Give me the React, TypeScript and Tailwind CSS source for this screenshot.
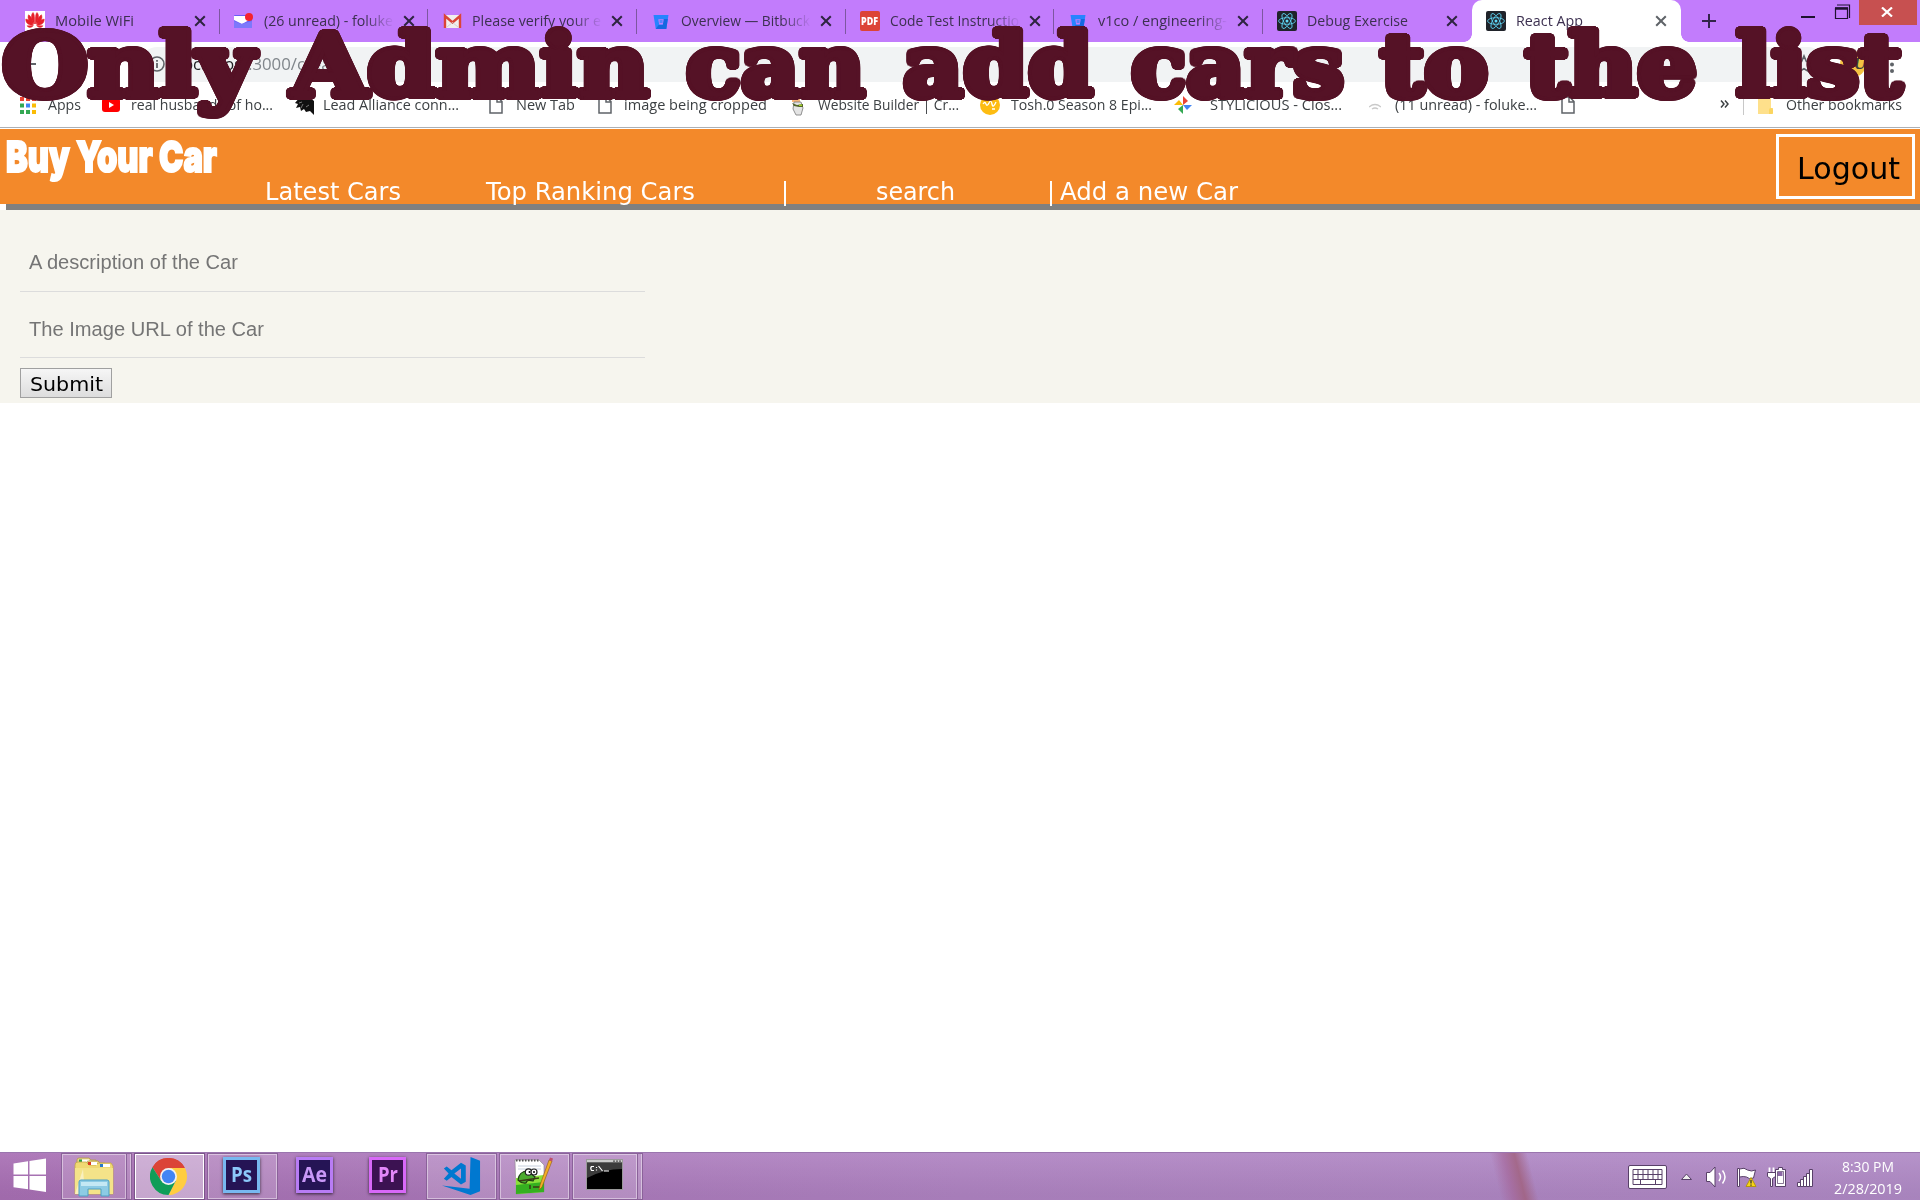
import { useLayoutEffect, useRef, type ReactNode } from 'react';

const UI = 'font-["Open_Sans",sans-serif]';

/* Single line of text squeezed or stretched horizontally to a given width. */
function Fit({ w, className = '', children }: { w: number; className?: string; children: ReactNode }) {
  const text = useRef<HTMLSpanElement>(null);
  useLayoutEffect(() => {
    const el = text.current;
    if (el && el.offsetWidth) {
      el.style.transform = 'none';
      el.style.transform = `scaleX(${w / el.getBoundingClientRect().width})`;
    }
  }, [w]);
  return (
    <span className={`block shrink-0 whitespace-pre ${className}`} style={{ width: w }}>
      <span ref={text} className="inline-block origin-left">{children}</span>
    </span>
  );
}

function Cross({ color = '#33294a' }: { color?: string }) {
  return (
    <svg width="12" height="12" viewBox="0 0 12 12" className="shrink-0">
      <path d="M1.2 1.2l9.6 9.6M10.8 1.2l-9.6 9.6" stroke={color} strokeWidth="2" />
    </svg>
  );
}

function ReactIcon() {
  return (
    <svg width="20" height="20" viewBox="0 0 20 20">
      <rect width="20" height="20" rx="2" fill="#20232a" />
      <g fill="none" stroke="#61dafb" strokeWidth=".8">
        <ellipse cx="10" cy="10" rx="8.4" ry="3.3" />
        <ellipse cx="10" cy="10" rx="8.4" ry="3.3" transform="rotate(60 10 10)" />
        <ellipse cx="10" cy="10" rx="8.4" ry="3.3" transform="rotate(120 10 10)" />
      </g>
      <circle cx="10" cy="10" r="1.5" fill="#61dafb" />
    </svg>
  );
}

function Bitbucket() {
  return (
    <svg width="20" height="20" viewBox="0 0 20 20">
      <path d="M2.5 4h15l-2.2 14H4.8z" fill="#2684ff" />
      <path d="M12.5 8h4.3l-1.5 10H4.8l2.8-4h4.2z" fill="#1668e0" />
      <path d="M7.3 8.2h5.4l-.9 5.2H8.2z" fill="#c27cfc" />
      <path d="M8.6 9h3v3h-3z" fill="#2684ff" opacity=".7" />
    </svg>
  );
}

const favicons: Record<string, ReactNode> = {
  huawei: (
    <svg width="20" height="20" viewBox="0 0 20 20">
      <rect width="20" height="20" fill="#fff" />
      <g fill="#e6202a" stroke="#e6202a" strokeWidth=".5">
        <path d="M9.6 13C6 9 5.500 4 8 1.500 9.400 2.500 9.800 7 9.600 13zM10.400 13C14 9 14.500 4 12 1.500 10.600 2.500 10.200 7 10.400 13z" />
        <path d="M8.600 13.200C4.500 11.500 2 8 3.500 3.800 6 5 8 9 8.600 13.200zM11.400 13.200C15.500 11.500 18 8 16.500 3.800 14 5 12 9 11.400 13.200z" />
        <path d="M8.300 14.300C3.500 14.500.5 12 .8 8 4 8.500 6.800 11 8.300 14.300zM11.700 14.300C16.500 14.500 19.500 12 19.200 8 16 8.500 13.200 11 11.700 14.300z" />
        <path d="M2 14.800h6.200C6 17.200 3.500 17 2 14.800zM18 14.800h-6.200C14 17.200 16.500 17 18 14.800z" />
      </g>
    </svg>
  ),
  mail: (
    <svg width="20" height="20" viewBox="0 0 20 20">
      <rect x="0" y="4" width="18" height="13" rx="1" fill="#6a5cf6" />
      <path d="M0 5h12l5 3-9 5-8-4z" fill="#fff" />
      <path d="M0 10l7 3 11-3v7H0z" fill="#7d78fb" />
      <circle cx="15" cy="6" r="4" fill="#f5222d" />
    </svg>
  ),
  gmail: (
    <svg width="20" height="20" viewBox="0 0 20 20">
      <path d="M2 4h17v13H2z" fill="#f1eeee" />
      <path d="M3 17V5l7.500 6.500L18 5v12" fill="none" stroke="#db4437" strokeWidth="2.400" />
      <path d="M5 16l5.500-4.500L16 16" fill="none" stroke="#d4d0d0" strokeWidth="1" />
    </svg>
  ),
  bitbucket: <Bitbucket />,
  pdf: (
    <span className="flex h-5 w-5 items-center justify-center rounded-[2px] bg-[#dc4437]">
      <Fit w={17} className='font-["Open_Sans",sans-serif] text-[10px] leading-5 font-extrabold text-white'>PDF</Fit>
    </span>
  ),
  react: <ReactIcon />,
};

type Tab = { icon: string; title: string; w: number; active?: boolean; noSep?: boolean };
const tabs: Tab[] = [
  { icon: 'huawei', title: 'Mobile WiFi', w: 79 },
  { icon: 'mail', title: '(26 unread) - foluke', w: 129 },
  { icon: 'gmail', title: 'Please verify your e', w: 129 },
  { icon: 'bitbucket', title: 'Overview — Bitbuck', w: 129 },
  { icon: 'pdf', title: 'Code Test Instructio', w: 129 },
  { icon: 'bitbucket', title: 'v1co / engineering-', w: 129 },
  { icon: 'react', title: 'Debug Exercise', w: 101, noSep: true },
  { icon: 'react', title: 'React App', w: 67, active: true, noSep: true },
];

function TabStrip() {
  return (
    <div className={`flex h-[42px] bg-[#c27cfc] pl-[11px] ${UI}`}>
      {tabs.map((t, i) => (
        <div
          key={i}
          className={`relative flex h-[42px] w-[208.7px] shrink-0 items-center pl-[14px] ${t.active ? 'rounded-t-[10px] bg-white' : ''}`}
        >
          {t.active && (
            <>
              <span className="absolute bottom-0 -left-2 h-2 w-2 bg-[radial-gradient(circle_at_0_0,#c27cfc_7.5px,#fff_8px)]" />
              <span className="absolute -right-2 bottom-0 h-2 w-2 bg-[radial-gradient(circle_at_100%_0,#c27cfc_7.5px,#fff_8px)]" />
            </>
          )}
          <span className="h-5 w-5 shrink-0">{favicons[t.icon]}</span>
          <span
            className={`mb-[2px] ml-[10px] w-[129px] shrink-0 overflow-hidden text-[15px] leading-[22px] text-[#3c3050] ${t.w > 120 ? '[mask-image:linear-gradient(to_right,#000_78%,transparent_101%)]' : ''}`}
          >
            <Fit w={t.w}>{t.title}</Fit>
          </span>
          <span className="ml-[10px] flex"><Cross color={t.active ? '#5f6368' : '#2e2440'} /></span>
          {!t.noSep && <span className="ml-auto h-[25px] w-px bg-[#7d56a0]" />}
        </div>
      ))}
      <svg width="16" height="16" viewBox="0 0 16 16" className="mt-[13px] ml-[20px]">
        <path d="M8 1v14M1 8h14" stroke="#33244a" strokeWidth="2" />
      </svg>
      <svg width="50" height="20" viewBox="0 0 50 20" className="ml-auto">
        <path d="M0 17h14" stroke="#1f1230" strokeWidth="2" />
        <path d="M34.500 8.500h12v10h-12zM34 8h13M36 5h12.500v13" fill="none" stroke="#1f1230" strokeWidth="1.200" />
        <path d="M34 8.500h13" stroke="#1f1230" strokeWidth="2.500" />
      </svg>
      <div className="mr-[3px] ml-[8px] flex h-[25px] w-[58px] items-center justify-center bg-[#c75050]">
        <svg width="12" height="10" viewBox="0 0 12 10" className="mr-[2px] mb-[2px]">
          <path d="M1 .5l10 9M11 .5l-10 9" stroke="#fff" strokeWidth="2.200" />
        </svg>
      </div>
    </div>
  );
}

function AddressBar() {
  return (
    <div className={`flex h-[44px] items-center bg-white ${UI}`}>
      <svg width="112" height="20" viewBox="0 0 112 20" className="ml-5" fill="none" stroke="#5f6368" strokeWidth="2">
        <path d="M16 10H1M8 3l-7 7 7 7" />
        <path d="M45 10h14M53 4l6 6-6 6" />
        <path d="M94 12a7 7 0 1 1-1-6M94 1v5h-5" />
      </svg>
      <div className="ml-[8px] flex h-[35px] w-[1685px] items-center rounded-[18px] bg-[#f1f3f4] pl-[9px]">
        <svg width="16" height="16" viewBox="0 0 16 16">
          <circle cx="8" cy="8" r="7" fill="none" stroke="#5f6368" strokeWidth="1.600" />
          <path d="M8 7v5M8 4v1.800" stroke="#5f6368" strokeWidth="1.800" />
        </svg>
        <span className="ml-[14px] flex text-[17px] leading-6 text-[#202124]">
          <Fit w={69}>localhost</Fit>
          <Fit w={98} className="text-[#80868b]">:3000/create</Fit>
        </span>
        <svg width="20" height="20" viewBox="0 0 20 20" className="mr-[11px] ml-auto">
          <path d="M10 2l2.400 5.500 5.800.5-4.400 3.900 1.300 5.800L10 14.700l-5.100 3 1.300-5.800L1.800 8l5.800-.5z" fill="none" stroke="#5f6368" strokeWidth="1.700" />
        </svg>
      </div>
      <span className='ml-[15px] flex h-[26px] w-[26px] items-center justify-end rounded-full bg-[#f5c242] font-["Liberation_Serif",serif] text-[17px] leading-[26px] font-bold text-[#3c3c3c] italic'>
        U
      </span>
      <svg width="6" height="20" viewBox="0 0 6 20" className="ml-[23px]" fill="#5f6368">
        <circle cx="3" cy="4" r="2" /><circle cx="3" cy="10.500" r="2" /><circle cx="3" cy="17" r="2" />
      </svg>
    </div>
  );
}

const Page = () => (
  <svg width="14" height="18" viewBox="0 0 14 18">
    <path d="M1 1h7.500L13 5.500V17H1zM8 1v5h5" fill="#fff" stroke="#5f6368" strokeWidth="1.500" />
  </svg>
);

const bookmarks: { x: number; tx: number; w: number; label: string; icon: ReactNode }[] = [
  {
    x: 20, tx: 48, w: 33, label: 'Apps',
    icon: (
      <svg width="16" height="17" viewBox="0 0 16 17">
        <path d="M0 0h4v4H0zM6 0h4v4H6zM12 0h4v4h-4z" fill="#ea4335" />
        <path d="M0 6.500h4v4H0zM0 13h4v4H0z" fill="#34a853" />
        <path d="M6 6.500h4v4H6z" fill="#4285f4" />
        <path d="M6 13h4v4H6z" fill="#34a853" />
        <path d="M12 6.500h4v4h-4zM12 13h4v4h-4z" fill="#fbbc05" />
      </svg>
    ),
  },
  {
    x: 102, tx: 131, w: 142, label: 'real husbands of ho...',
    icon: (
      <svg width="18" height="14" viewBox="0 0 18 14">
        <rect width="18" height="14" rx="3" fill="#f00" />
        <path d="M7 4l5 3-5 3z" fill="#fff" />
      </svg>
    ),
  },
  {
    x: 294, tx: 323, w: 136, label: 'Lead Alliance conn...',
    icon: (
      <svg width="20" height="20" viewBox="0 0 20 20">
        <path d="M1 8L6 2h9l5 4v14l-4-4-4 1-2-3-3 2-1-4-4 1 2-4z" fill="#111" />
        <path d="M7 13l2-4M12 12l3-2M5 8l3-1" stroke="#777" strokeWidth="1" />
      </svg>
    ),
  },
  { x: 489, tx: 516, w: 59, label: 'New Tab', icon: <Page /> },
  { x: 598, tx: 624, w: 143, label: 'image being cropped', icon: <Page /> },
  {
    x: 790, tx: 818, w: 141, label: 'Website Builder | Cr...',
    icon: (
      <svg width="16" height="21" viewBox="0 0 16 21">
        <path d="M2 0l3 3 2-3 3 3V7H2z" fill="#f7b77c" />
        <path d="M4 7h7l2 6-2 7H6l-3-6z" fill="#e4e4e4" stroke="#777" strokeWidth=".8" />
        <path d="M2 8l5 2 6-1v3H9l-5-1z" fill="#53652a" />
        <path d="M9 9.500h3v1.500H9z" fill="#a4d32a" />
      </svg>
    ),
  },
  {
    x: 980, tx: 1011, w: 141, label: 'Tosh.0 Season 8 Epi...',
    icon: (
      <svg width="20" height="20" viewBox="0 0 20 20">
        <circle cx="10" cy="10" r="10" fill="#fdbc12" />
        <path d="M3 9q2-3 3 0t3-1 3 1 4-2M12 14h3" fill="none" stroke="#fff" strokeWidth="1.300" />
      </svg>
    ),
  },
  {
    x: 1174, tx: 1210, w: 132, label: 'STYLICIOUS - Clos...',
    icon: (
      <svg width="18" height="18" viewBox="0 0 18 18">
        <path d="M9 0l5 5-5 4z" fill="#ea4335" />
        <path d="M18 9l-5 5-4-5z" fill="#4285f4" />
        <path d="M9 18l-5-5 5-4z" fill="#34a853" />
        <path d="M0 9l5-5 4 5z" fill="#fbbc05" />
      </svg>
    ),
  },
  {
    x: 1369, tx: 1395, w: 142, label: '(11 unread) - foluke...',
    icon: (
      <svg width="12" height="16" viewBox="0 0 12 16">
        <path d="M0 10q6-5 12 0M3 12q3-2 6 0" fill="none" stroke="#c9c9c9" strokeWidth="1.300" />
      </svg>
    ),
  },
  { x: 1561, tx: 1585, w: 0, label: '', icon: <Page /> },
];

function BookmarksBar() {
  return (
    <div className={`flex h-[41px] items-center bg-white pl-5 text-[15px] leading-5 text-[#3c4043] ${UI}`}>
      {bookmarks.map((b, i) => {
        const next = bookmarks[i + 1];
        return (
          <span key={b.x} className="flex shrink-0 items-center pb-[3px]" style={{ width: (next ? next.x : 1720) - b.x }}>
            <span className="shrink-0" style={{ width: b.tx - b.x }}>{b.icon}</span>
            {b.w > 0 && <Fit w={b.w} className="pb-[2px]">{b.label}</Fit>}
          </span>
        );
      })}
      <svg width="9" height="8" viewBox="0 0 9 8" className="mb-[5px]">
        <path d="M1 .5L4 4 1 7.500M5 .5L8 4 5 7.500" fill="none" stroke="#3c4043" strokeWidth="1.500" />
      </svg>
      <span className="mb-[2px] ml-[14px] h-[19px] w-px bg-[#c8c8c8]" />
      <svg width="17" height="19" viewBox="0 0 17 19" className="mb-[2px] ml-[13px]">
        <path d="M1 1h13v11h2v6H1z" fill="#fee08b" />
        <path d="M12 18v-4q0-2 2-2t2 2v3l-1 1z" fill="#fbd560" />
      </svg>
      <Fit w={116} className="ml-[12px] pb-[5px]">Other bookmarks</Fit>
    </div>
  );
}

const bannerWords: [string, number, number][] = [
  ['Only', 2, 252],
  ['Admin', 291, 358],
  ['can', 686, 179],
  ['add', 903, 190],
  ['cars', 1131, 213],
  ['to', 1380, 108],
  ['the', 1525, 172],
  ['list', 1736, 166],
];

/* Ring of hard shadows that thickens the letters and rounds their corners. */
const ring = (radius: number, steps: number) =>
  Array.from({ length: steps }, (_, i) => {
    const a = (i / steps) * Math.PI * 2;
    return `${(Math.cos(a) * radius).toFixed(2)}px ${(Math.sin(a) * radius).toFixed(2)}px 0 #551226`;
  });
const roundedWeight = [...ring(3.8, 24), ...ring(2, 10)].join(', ');

function Banner() {
  return (
    <div
      className='pointer-events-none absolute top-[1px] left-0 z-10 h-[130px] w-full font-["DejaVu_Serif",serif] text-[86px] leading-[130px] font-bold text-[#551226]'
      style={{ textShadow: roundedWeight }}
    >
      {bannerWords.map(([word, x, w]) => (
        <span key={word} className="absolute top-0" style={{ left: x }}>
          <Fit w={w}>{word}</Fit>
        </span>
      ))}
    </div>
  );
}

function SiteHeader() {
  return (
    <header className='bg-white font-["DejaVu_Sans",sans-serif]'>
      <div className="flex h-[75px] bg-[#f3892a]">
        <div className='w-[265px] pl-[6px] font-["Inter",sans-serif] text-[43px] leading-[55px] font-black text-white'>
          <Fit w={211} className="[-webkit-text-stroke:2px_white]">Buy Your Car</Fit>
        </div>
        <nav className="flex h-[75px] items-end text-[24px] leading-[24px] text-white">
          <Fit w={136}>Latest Cars</Fit>
          <Fit w={209} className="ml-[85px]">Top Ranking Cars</Fit>
          <Fit w={8} className="ml-[86px]">|</Fit>
          <Fit w={79} className="ml-[87px]">search</Fit>
          <Fit w={8} className="ml-[92px]">|</Fit>
          <Fit w={178} className="ml-[5px]">Add a new Car</Fit>
        </nav>
        <button className="mt-[5px] mr-[5px] ml-auto flex h-[65px] w-[139px] items-center border-[3px] border-white pt-[4px] pl-[18px] text-[30px] leading-[36px] text-black">
          <Fit w={103}>Logout</Fit>
        </button>
      </div>
      <div className="ml-[6px] h-[6px] bg-[#808080]" />
    </header>
  );
}

function CarForm() {
  return (
    <form className='h-[193px] bg-[#f6f5ee] pt-[24px] pl-5 font-["Liberation_Sans",sans-serif] text-[20px] text-[#757575]'>
      <div className="flex h-[58px] w-[625px] items-center border-b border-[#dcdcdc] pb-[2px] pl-[9px]">
        <Fit w={209}>A description of the Car</Fit>
      </div>
      <div className="mt-[8px] flex h-[58px] w-[625px] items-center border-b border-[#dcdcdc] pl-[9px]">
        <Fit w={235}>The Image URL of the Car</Fit>
      </div>
      <button
        type="button"
        className='mt-[10px] flex h-[30px] w-[92px] items-center border border-[#a0a0a0] bg-linear-to-b from-[#f6f6f6] to-[#dddddd] pt-px pl-[8px] font-["DejaVu_Sans",sans-serif] text-black'
      >
        <Fit w={73}>Submit</Fit>
      </button>
    </form>
  );
}

function AdobeIcon({ label, w, border, text, bg }: { label: string; w: number; border: string; text: string; bg: string }) {
  return (
    <span
      className="mr-[2px] mb-[4px] flex h-[36px] w-[37px] justify-center border-[3px] shadow-[0_1px_3px_rgba(0,0,0,0.7)]"
      style={{ borderColor: border, color: text, background: bg }}
    >
      <Fit w={w} className="text-[21px] leading-[28px] font-bold">{label}</Fit>
    </span>
  );
}

const taskItems: { w: number; gap: number; kind: 'open' | 'active' | 'none'; stub?: boolean; icon: ReactNode }[] = [
  {
    w: 66, gap: 0, kind: 'open', stub: true,
    icon: (
      <svg width="40" height="40" viewBox="0 0 40 40" className="mr-px">
        <path d="M3 8V3q0-2 2-2h10l2 2h5v8z" fill="#e6d58a" stroke="#b49b48" strokeWidth=".8" />
        <path d="M5 2.500h3v4H5z" fill="#2c9f45" /><path d="M8 2.500h7v4H8z" fill="#fff" />
        <path d="M13 10V5q0-1 1-1h10l2 2h5v6z" fill="#ecd98a" stroke="#b49b48" strokeWidth=".8" />
        <path d="M1 8q0-3 3-3h8l3 3h7l2-2h13l2 3v28H1z" fill="#f0d973" stroke="#c5a84a" strokeWidth=".8" />
        <path d="M14 5h3v3h-3z" fill="#dc3a20" /><path d="M17 5h6v3h-6z" fill="#fff" />
        <path d="M26 7h3v3h-3z" fill="#2779c9" /><path d="M29 7h7v3h-7z" fill="#fff" />
        <path d="M1 11h38v26H1z" fill="#f4e389" />
        <path d="M1 37L9 12l2 25z" fill="#fff" opacity=".45" />
        <path d="M5 39V25q0-2 2-2h26q2 0 2 2v14h-8v-7H14v7z" fill="#8dcbe4" stroke="#4c9fc4" />
        <path d="M7 25h26v4H7z" fill="#c4e8f4" />
      </svg>
    ),
  },
  {
    w: 71, gap: 2, kind: 'active',
    icon: (
      <svg width="37" height="37" viewBox="0 0 48 48" className="mr-[2px] mb-px">
        <path d="M24 24L3.200 12A24 24 0 0 1 44.800 12z" fill="#db4437" />
        <path d="M24 13h21.300A24 24 0 0 1 24 48l9.500-18.500z" fill="#ffcd40" />
        <path d="M24 13h21.300A24 24 0 0 0 3.200 12l11.300 17.500z" fill="#db4437" />
        <path d="M14.500 29.500L3.200 12A24 24 0 0 0 24 48l9.500-18.500z" fill="#0f9d58" />
        <circle cx="24" cy="24" r="11" fill="#f1f1f1" />
        <circle cx="24" cy="24" r="8.700" fill="#4285f4" />
      </svg>
    ),
  },
  { w: 71, gap: 2, kind: 'open', icon: <AdobeIcon label="Ps" w={21} border="#78b8f0" text="#8cc8fa" bg="#251455" /> },
  { w: 71, gap: 2, kind: 'none', icon: <AdobeIcon label="Ae" w={25} border="#b87cf5" text="#c898f8" bg="#251455" /> },
  { w: 71, gap: 2, kind: 'none', icon: <AdobeIcon label="Pr" w={20} border="#d868f8" text="#e388fa" bg="#3c1252" /> },
  {
    w: 71, gap: 2, kind: 'open',
    icon: (
      <svg width="40" height="40" viewBox="0 0 42 42" fill="#0078d0" className="mr-px mb-px">
        <path d="M31 1l10 4v32l-10 4L1 31l29 3.500z" />
        <path fillRule="evenodd" d="M21 7l5 3v17l-5 3-10-8-5 4-3-2 5-5.500L3 13l3-2 5 4zM21 13l-7 5.500 7 5.500z" />
      </svg>
    ),
  },
  {
    w: 71, gap: 2, kind: 'open',
    icon: (
      <svg width="40" height="38" viewBox="0 0 40 38" className="mr-[3px] mb-px">
        <path d="M2 3h24l5 5v27l-28 2z" fill="#fff" stroke="#888" strokeWidth=".6" />
        <path d="M3 3.500h23" stroke="#555" strokeWidth="2" strokeDasharray="1.500 1.500" />
        <path d="M5 9h23M5 12h23" stroke="#b8c4d4" strokeWidth=".8" />
        <path d="M3 21l28-3v17L3 37z" fill="#8be03a" />
        <path d="M3 28l28-3v10L3 37z" fill="#35b020" />
        <path d="M5 23q1-9 10-9l7 6-2 4q-6-2-7 2-4 1-8-3z" fill="#4cab2f" stroke="#1f3d14" strokeWidth="1.200" />
        <circle cx="15.500" cy="15" r="3.200" fill="#fff" stroke="#222" strokeWidth="1.200" />
        <circle cx="21" cy="15" r="3" fill="#fff" stroke="#222" strokeWidth="1.200" />
        <circle cx="16.500" cy="15" r="1" /><circle cx="21" cy="15" r="1" />
        <path d="M6 24l20-3M17 28v4M20 30h7" stroke="#3b3a16" strokeWidth="1.500" />
        <path d="M26 33l1-5L36 3l3 1-10 26z" fill="#f3ad28" stroke="#8c5a12" strokeWidth=".6" />
        <path d="M36 3l1-2.500 3 1-1 3z" fill="#c05068" />
      </svg>
    ),
  },
  {
    w: 66, gap: 2, kind: 'open', stub: true,
    icon: (
      <svg width="37" height="32" viewBox="0 0 37 32" className="mr-px mb-[3px]">
        <rect x=".5" y=".5" width="36" height="30" fill="#000" stroke="#999" />
        <path d="M1 1h35v2.500H1z" fill="#ccc" />
        <path d="M27 1.500h2v1.200h-2zM30 1.500h2v1.200h-2zM33 1.500h2v1.200h-2z" fill="#555" />
        <path d="M1 4h35v6Q18 10 1 19z" fill="#3c3c3c" />
        <path d="M8 7.500H5.500q-1.500 1.500 0 4H8M10.500 8v1M10.500 10.500v1M12.500 7l4 5M18 12h5" stroke="#fff" strokeWidth="1.200" fill="none" />
      </svg>
    ),
  },
];

const frame = {
  open: 'border border-[#8a6299] bg-[#ffffff2b] shadow-[inset_0_0_0_1px_#ffffff70]',
  active: 'border border-[#7a5589] bg-[#ffffff66] shadow-[inset_0_0_0_1px_#fff]',
  none: '',
};

function Taskbar() {
  return (
    <footer className={`relative mt-auto flex h-12 border-t border-[#9a75ae] bg-linear-to-r from-[#a86fb4] via-[#af83c2] to-[#b08ac6] ${UI}`}>
      <div className="absolute inset-0 bg-linear-to-b from-[#ffffff14] to-[#0000000c]" />
      <div className="absolute top-0 left-[1480px] h-full w-[70px] bg-[linear-gradient(76deg,transparent_26%,#a3629399_42%,#a0607ccc_56%,transparent_72%)]" />
      <div className="relative flex w-full">
        <svg width="34" height="35" viewBox="0 0 34 35" className="mt-[5px] ml-[13px]" fill="#fff">
          <path d="M.5 5.500L15 3.200V16.500H.5zM16.500 3L33 .5v16H16.500zM.5 18H15v13.300L.5 29.200zM16.500 18H33v16l-16.500-2.500z" />
        </svg>
        <div className="ml-[14px] flex">
          {taskItems.map((t, i) => (
            <div key={i} className="flex" style={{ marginLeft: t.gap }}>
              <div className={`flex h-[47px] shrink-0 items-center justify-center ${frame[t.kind]}`} style={{ width: t.w }}>
                {t.icon}
              </div>
              {t.stub && <div className="h-[47px] w-[5px] border-y border-r border-[#8a6299] bg-[#ffffff2b] shadow-[inset_-1px_0_0_0_#ffffff70]" />}
            </div>
          ))}
        </div>
        <svg width="187" height="28" viewBox="0 0 187 28" className="mt-[10px] mr-[19px] ml-auto">
          <g stroke="#584068" strokeWidth="1">
            <rect x=".5" y="2.500" width="38" height="23" rx="1.500" fill="#fff" />
            <path d="M5 6.500h29v15H5zM5 11.500h29M5 16.500h29M10 6v10M15 6v10M20 6v10M25 6v10M30 6v10M12.500 17v4M27.500 17v4" fill="none" />
            <path d="M53.500 16.500L58.500 11l5 5.500z" fill="#eee" />
            <path d="M78.500 9.500h3.500l5-5.500v20l-5-5.500h-3.500z" fill="#fff" />
            <path d="M109.500 5.500h2v18h-2zM111.500 6q5-2 8 1 4 2 8 0l-2 8q-4 2-7-1-3-1-7 0z" fill="#fff" />
            <path d="M123 14.500l5 9h-10z" fill="#f7d417" stroke="#b39511" />
            <path d="M141.500 4.500v6M145.500 4.500v6" stroke="#fff" strokeWidth="1.800" />
            <path d="M139.500 9.500h8v4l-3 2v8h-2v-8l-3-2z" fill="#fff" />
            <path d="M150.500 4.500h4v2h3v17h-10v-17h3z" fill="#fff" />
            <path d="M149.500 9h5v4h-5z" fill="#8c67a5" stroke="none" />
            <path d="M149.500 8.500h6v12h-6z" fill="none" strokeWidth=".7" />
            <path d="M169.500 19.500h3v4h-3zM172.500 16.500h3v7h-3zM175.500 13.500h3v10h-3zM178.500 10.500h3v13h-3zM181.500 6.500h3v17h-3z" fill="#fff" />
          </g>
          <path d="M91 10q3 4 0 8M94.500 7.500q5 6.500 0 13" fill="none" stroke="#fff" strokeWidth="1.500" />
          <path d="M123 17v3.500M123 21.500v1.200" stroke="#333" strokeWidth="1.300" />
        </svg>
        <div className="mr-[18px] flex w-[68px] flex-col items-center pt-[3px] text-[14.5px] leading-[22px] text-white">
          <Fit w={52}>8:30 PM</Fit>
          <Fit w={68}>2/28/2019</Fit>
        </div>
      </div>
    </footer>
  );
}

export default function App() {
  return (
    <div className="relative flex h-[1200px] w-[1920px] flex-col overflow-hidden bg-white">
      <TabStrip />
      <AddressBar />
      <BookmarksBar />
      <div className="h-[2px] border-t border-[#adb0b5] bg-white" />
      <SiteHeader />
      <CarForm />
      <Taskbar />
      <Banner />
    </div>
  );
}
